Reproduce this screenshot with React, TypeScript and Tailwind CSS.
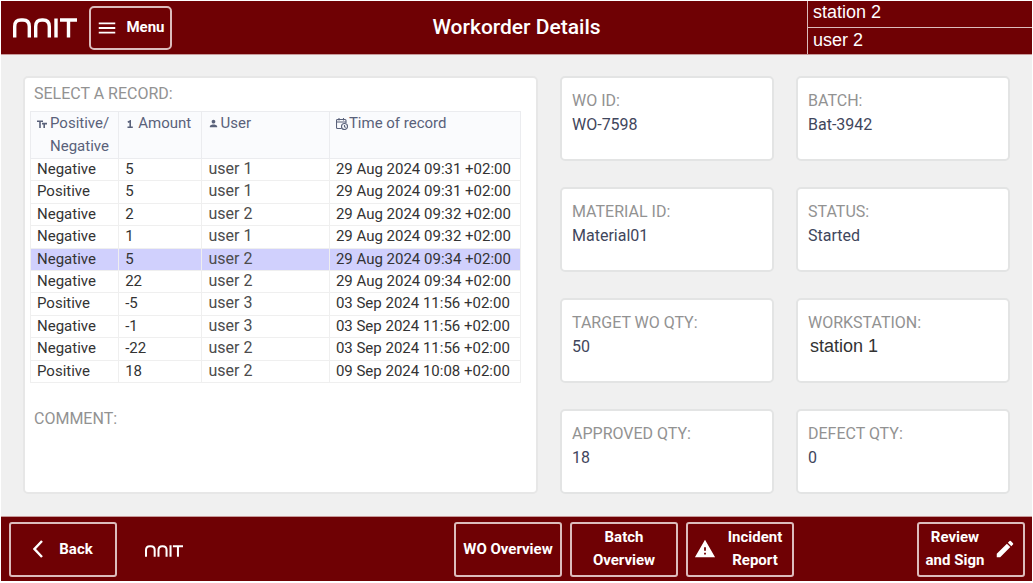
import { useState } from 'react';
import { MdEdit, MdMenu, MdPerson, MdWarning } from 'react-icons/md';

const records = [
    { sign: 'Negative', amount: 5, user: 'user 1', time: '29 Aug 2024 09:31 +02:00' },
    { sign: 'Positive', amount: 5, user: 'user 1', time: '29 Aug 2024 09:31 +02:00' },
    { sign: 'Negative', amount: 2, user: 'user 2', time: '29 Aug 2024 09:32 +02:00' },
    { sign: 'Negative', amount: 1, user: 'user 1', time: '29 Aug 2024 09:32 +02:00' },
    { sign: 'Negative', amount: 5, user: 'user 2', time: '29 Aug 2024 09:34 +02:00' },
    { sign: 'Negative', amount: 22, user: 'user 2', time: '29 Aug 2024 09:34 +02:00' },
    { sign: 'Positive', amount: -5, user: 'user 3', time: '03 Sep 2024 11:56 +02:00' },
    { sign: 'Negative', amount: -1, user: 'user 3', time: '03 Sep 2024 11:56 +02:00' },
    { sign: 'Negative', amount: -22, user: 'user 2', time: '03 Sep 2024 11:56 +02:00' },
    { sign: 'Positive', amount: 18, user: 'user 2', time: '09 Sep 2024 10:08 +02:00' },
];

const details = [
    { label: 'WO ID:', value: 'WO-7598' },
    { label: 'BATCH:', value: 'Bat-3942' },
    { label: 'MATERIAL ID:', value: 'Material01' },
    { label: 'STATUS:', value: 'Started' },
    { label: 'TARGET WO QTY:', value: '50' },
    { label: 'WORKSTATION:', value: 'station 1', station: true },
    { label: 'APPROVED QTY:', value: '18' },
    { label: 'DEFECT QTY:', value: '0' },
];

const cell = 'border border-[#efefef] px-[6px] py-0 align-baseline';
const headCell = 'border border-[#ebecef] px-[6px] py-0 align-top font-normal';
const footerButton = 'flex h-[55px] w-[108px] items-center justify-center rounded-[3px] border-2 border-[#dcbcbc] text-center';

function Logo({ className }: { className: string }) {
    return (
        <svg viewBox="0 0 64 20" className={className} fill="none" stroke="currentColor" strokeWidth="3.4" role="img" aria-label="NNIT">
            <path d="M1.7 19.5V8.5Q1.7 2 8 2H10Q16.3 2 16.3 8.5V19.5" />
            <path d="M22.7 19.5V8.5Q22.7 2 29 2H30Q36.3 2 36.3 8.5V19.5" />
            <path d="M43 .5V19.5M47 2H64M55.5 2V19.5" />
        </svg>
    );
}

function TextIcon() {
    return (
        <svg viewBox="0 0 10 8" className="mt-2 h-2 w-[10px] shrink-0" fill="none" stroke="currentColor" strokeWidth="1.6">
            <path d="M0 1.2H6M3 1.2V8M5 3.6H10M7.2 3.6V8" />
        </svg>
    );
}

function NumberIcon() {
    return (
        <svg viewBox="0 0 6 8" className="mt-2 h-2 w-[6px] shrink-0" fill="none" stroke="currentColor" strokeWidth="1.6">
            <path d="M.8 2.2L3.2 1V7M.5 7.2H5.8" />
        </svg>
    );
}

function CalendarClockIcon() {
    return (
        <svg viewBox="0 0 12 12" className="mt-[6px] h-3 w-3 shrink-0" fill="none" stroke="currentColor" strokeWidth="1.1">
            <path d="M5.5 10.5H1.5Q.5 10.5 .5 9.5V2.5Q.5 1.5 1.5 1.5H9Q10 1.5 10 2.5V5M.5 4H10M3 0V2.5M7.5 0V2.5" />
            <circle cx="8.5" cy="8.5" r="3" />
            <path d="M8.5 7V8.7L9.7 9.4" />
        </svg>
    );
}

export default function App() {
    const [selected, setSelected] = useState(4);

    return (
        <div className="flex min-h-screen flex-col bg-white px-px pt-px pb-[2px] font-['Roboto',sans-serif]">
            <header className="grid h-[54px] grid-cols-[1fr_auto_1fr] border-b border-[#c79a9a] bg-[#6f0104] text-white">
                <div className="flex items-center gap-3 pl-3">
                    <Logo className="h-5 w-16" />
                    <button className="flex h-11 w-[83px] items-center justify-center gap-2 rounded-[5px] border-2 border-[#dcbcbc] text-[15px] font-bold">
                        <MdMenu size={22} />
                        Menu
                    </button>
                </div>
                <h1 className="self-center text-[21px] font-medium">Workorder Details</h1>
                <div className="w-[225px] justify-self-end border-l border-[#dcbcbc] font-['Liberation_Sans',sans-serif] text-lg leading-6">
                    <p className="h-[27px] border-b border-[#dcbcbc] pl-[5px] leading-[22px]">station 2</p>
                    <p className="pl-[5px]">user 2</p>
                </div>
            </header>

            <main className="grid flex-1 grid-cols-[515fr_214fr_214fr] gap-x-[22px] bg-[#f0f0f0] px-[22px] pt-[21px] pb-[22px]">
                <section className="rounded-[5px] border-2 border-[#e7e7e7] bg-white pt-1 pr-[15px] pl-[5px]">
                    <h2 className="pl-1 text-base text-[#929292]">SELECT A RECORD:</h2>
                    <table className="mt-[5px] h-[272px] w-full table-fixed border-collapse text-left text-[15px] leading-5 text-[#333]">
                        <thead>
                            <tr className="h-[46px] bg-[#fafbfd] leading-[23px] text-[#59617a]">
                                <th className={`w-[18%] ${headCell}`}>
                                    <span className="flex gap-[3px]">
                                        <TextIcon />
                                        <span>Positive/<br />Negative</span>
                                    </span>
                                </th>
                                <th className={`w-[17%] ${headCell}`}>
                                    <span className="flex gap-[5px] pl-[2px]"><NumberIcon />Amount</span>
                                </th>
                                <th className={`w-[26%] ${headCell}`}>
                                    <span className="flex gap-px"><MdPerson size={11} className="mt-[6px]" />User</span>
                                </th>
                                <th className={headCell}>
                                    <span className="flex gap-px"><CalendarClockIcon />Time of record</span>
                                </th>
                            </tr>
                        </thead>
                        <tbody>
                            {records.map((record, i) => (
                                <tr
                                    key={i}
                                    onClick={() => setSelected(i)}
                                    className={i === selected ? 'cursor-pointer bg-[#d0d0fd]' : 'cursor-pointer'}
                                >
                                    <td className={cell}>{record.sign}</td>
                                    <td className={cell}>{record.amount}</td>
                                    <td className={`${cell} text-base leading-5 text-[#4c4c4c]`}>{record.user}</td>
                                    <td className={cell}>{record.time}</td>
                                </tr>
                            ))}
                        </tbody>
                    </table>
                    <h2 className="mt-6 pl-1 text-base text-[#929292]">COMMENT:</h2>
                </section>

                <dl className="col-span-2 grid grid-cols-2 grid-rows-4 gap-x-[22px] gap-y-[26px]">
                    {details.map((item) => (
                        <div key={item.label} className="rounded-[5px] border-2 border-[#e3e4e4] bg-white px-[10px] pt-[11px] text-base">
                            <dt className="text-[#929292]">{item.label}</dt>
                            <dd className={item.station ? "pl-[2px] font-['Liberation_Sans',sans-serif] text-lg leading-[22px] text-[#333]" : 'text-[#3f465c]'}>
                                {item.value}
                            </dd>
                        </div>
                    ))}
                </dl>
            </main>

            <footer className="flex h-[65px] items-center gap-2 border-t border-[#c79a9a] bg-[#6f0104] pr-[7px] pl-2 text-[15px] leading-[23px] font-bold text-white">
                <button className={`${footerButton} gap-4`}>
                    <svg viewBox="0 0 10 18" className="h-[18px] w-[10px]" fill="none" stroke="currentColor" strokeWidth="2.4">
                        <path d="M9 1L1.5 9L9 17" />
                    </svg>
                    Back
                </button>
                <Logo className="mt-1 ml-5 h-3 w-[38px]" />
                <div className="flex flex-1 justify-end gap-2 pr-[115px]">
                    <button className={footerButton}>WO Overview</button>
                    <button className={footerButton}>Batch<br />Overview</button>
                    <button className={`${footerButton} gap-3 pr-1`}>
                        <MdWarning size={22} />
                        <span>Incident<br />Report</span>
                    </button>
                </div>
                <button className={`${footerButton} gap-[10px]`}>
                    <span>Review<br />and Sign</span>
                    <MdEdit size={22} />
                </button>
            </footer>
        </div>
    );
}
